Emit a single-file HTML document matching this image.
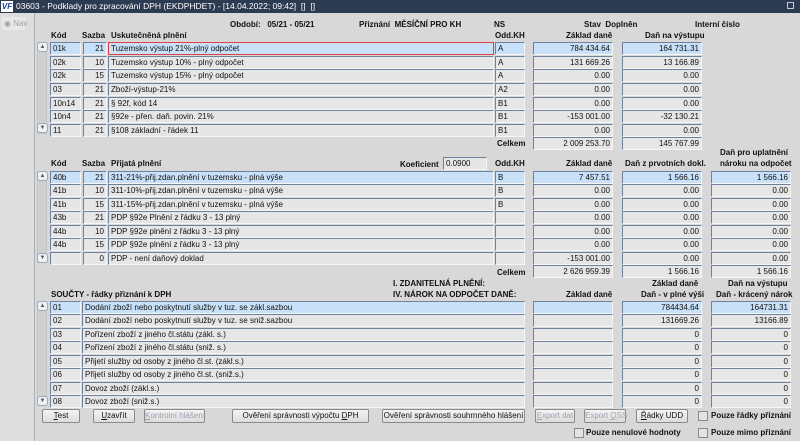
<!DOCTYPE html>
<html><head><meta charset="utf-8"><style>
*{margin:0;padding:0;box-sizing:border-box}
body{width:800px;height:441px;overflow:hidden;background:#d8d8d8;font-family:"Liberation Sans",Arial,sans-serif;font-size:8px;color:#111;position:relative}
div{position:absolute;white-space:nowrap}
#tb{left:0;top:0;width:800px;height:13px;background:#2c3a52;color:#fff;font-size:8.5px;line-height:13px;padding-left:16px}
#logo{left:1px;top:1px;width:12px;height:11px;background:#fff;color:#1a3ea0;font-weight:bold;font-size:8px;line-height:11px;text-align:center;font-style:italic}
#left{left:0;top:13px;width:35px;height:428px;background:#dedede;border-right:1px solid #a8b0bc}
.f{height:13px;background:#e6e6e6;border:1px solid;border-color:#6f819e #f6f6f6 #f6f6f6 #6f819e;line-height:11px;padding:0 2px;overflow:hidden}
.r{text-align:right}
.s{background:#c8e1f9}
.h{font-weight:bold}
.sb{left:37px;width:10px;background:#d0d0d0;border:1px solid #c4c4c4}
.ar{left:37px;width:11px;height:10px;border:1px solid #a0a8b8;border-radius:3px;background:#eef0f4;font-size:6px;line-height:8px;text-align:center;color:#556}
.b{height:14px;border:1px solid #8a8a8a;background:linear-gradient(#f4f4f4,#dcdcdc);text-align:center;line-height:12px;border-radius:2px}
.dis{color:#9aa0b0}
.cb{width:10px;height:10px;border:1px solid #8a8a8a;background:#e4e4e4}
</style></head><body>
<div id="tb">03603 - Podklady pro zpracování DPH (EKDPHDET) - [14.04.2022; 09:42] &nbsp;[] &nbsp;[]</div>
<div id="logo">VF</div>
<div style="right:6px;top:2px;width:7px;height:7px;border:1px solid #ccc"></div>
<div id="left"></div>
<div style="left:2px;top:17px;width:23px;height:13px;background:#e8e8e8;color:#a0a0a0;line-height:13px;padding-left:2px">◉ Nav</div>

<div class="h" style="left:230px;top:20px">Období: &nbsp;&nbsp;05/21 - 05/21</div>
<div class="h" style="left:359px;top:20px">Přiznání &nbsp;MĚSÍČNÍ PRO KH</div>
<div class="h" style="left:494px;top:20px">NS</div>
<div class="h" style="left:584px;top:20px">Stav &nbsp;Doplněn</div>
<div class="h" style="left:695px;top:20px">Interní číslo</div>
<div class="h" style="left:51px;top:31px">Kód</div>
<div class="h" style="left:82px;top:31px">Sazba</div>
<div class="h" style="left:111px;top:31px">Uskutečněná plnění</div>
<div class="h" style="left:495px;top:31px">Odd.KH</div>
<div class="h" style="left:566px;top:31px">Základ daně</div>
<div class="h" style="left:645px;top:31px">Daň na výstupu</div>

<div class="sb" style="top:42px;height:92px"></div>
<div class="ar" style="top:42px">▲</div><div class="ar" style="top:123px">▼</div>

<div class="f s" style="left:50px;top:42px;width:31px">01k</div><div class="f r s" style="left:83px;top:42px;width:24px">21</div><div class="f s" style="left:108px;top:42px;width:386px;border:1px solid #e04040">Tuzemsko výstup 21%-plný odpočet</div><div class="f s" style="left:495px;top:42px;width:30px">A</div><div class="f r s" style="left:533px;top:42px;width:80px">784 434.64</div><div class="f r s" style="left:622px;top:42px;width:80px">164 731.31</div>
<div class="f" style="left:50px;top:56px;width:31px">02k</div><div class="f r" style="left:83px;top:56px;width:24px">10</div><div class="f" style="left:108px;top:56px;width:386px">Tuzemsko výstup 10% - plný odpočet</div><div class="f" style="left:495px;top:56px;width:30px">A</div><div class="f r" style="left:533px;top:56px;width:80px">131 669.26</div><div class="f r" style="left:622px;top:56px;width:80px">13 166.89</div>
<div class="f" style="left:50px;top:69px;width:31px">02k</div><div class="f r" style="left:83px;top:69px;width:24px">15</div><div class="f" style="left:108px;top:69px;width:386px">Tuzemsko výstup 15% - plný odpočet</div><div class="f" style="left:495px;top:69px;width:30px">A</div><div class="f r" style="left:533px;top:69px;width:80px">0.00</div><div class="f r" style="left:622px;top:69px;width:80px">0.00</div>
<div class="f" style="left:50px;top:83px;width:31px">03</div><div class="f r" style="left:83px;top:83px;width:24px">21</div><div class="f" style="left:108px;top:83px;width:386px">Zboží-výstup-21%</div><div class="f" style="left:495px;top:83px;width:30px">A2</div><div class="f r" style="left:533px;top:83px;width:80px">0.00</div><div class="f r" style="left:622px;top:83px;width:80px">0.00</div>
<div class="f" style="left:50px;top:97px;width:31px">10n14</div><div class="f r" style="left:83px;top:97px;width:24px">21</div><div class="f" style="left:108px;top:97px;width:386px">§ 92f, kód 14</div><div class="f" style="left:495px;top:97px;width:30px">B1</div><div class="f r" style="left:533px;top:97px;width:80px">0.00</div><div class="f r" style="left:622px;top:97px;width:80px">0.00</div>
<div class="f" style="left:50px;top:110px;width:31px">10n4</div><div class="f r" style="left:83px;top:110px;width:24px">21</div><div class="f" style="left:108px;top:110px;width:386px">§92e - přen. daň. povin. 21%</div><div class="f" style="left:495px;top:110px;width:30px">B1</div><div class="f r" style="left:533px;top:110px;width:80px">-153 001.00</div><div class="f r" style="left:622px;top:110px;width:80px">-32 130.21</div>
<div class="f" style="left:50px;top:124px;width:31px">11</div><div class="f r" style="left:83px;top:124px;width:24px">21</div><div class="f" style="left:108px;top:124px;width:386px">§108 základní - řádek 11</div><div class="f" style="left:495px;top:124px;width:30px">B1</div><div class="f r" style="left:533px;top:124px;width:80px">0.00</div><div class="f r" style="left:622px;top:124px;width:80px">0.00</div>
<div class="h" style="left:497px;top:139px">Celkem</div>
<div class="f r" style="left:533px;top:137px;width:80px">2 009 253.70</div><div class="f r" style="left:622px;top:137px;width:80px">145 767.99</div>

<div class="h" style="left:720px;top:148px">Daň pro uplatnění</div>
<div class="h" style="left:720px;top:159px">nároku na odpočet</div>
<div class="h" style="left:51px;top:159px">Kód</div>
<div class="h" style="left:82px;top:159px">Sazba</div>
<div class="h" style="left:111px;top:159px">Přijatá plnění</div>
<div class="h" style="left:400px;top:160px">Koeficient</div>
<div class="f" style="left:443px;top:157px;width:44px">0.0900</div>
<div class="h" style="left:495px;top:159px">Odd.KH</div>
<div class="h" style="left:566px;top:159px">Základ daně</div>
<div class="h" style="left:625px;top:159px">Daň z prvotních dokl.</div>

<div class="sb" style="top:171px;height:92px"></div>
<div class="ar" style="top:171px">▲</div><div class="ar" style="top:253px">▼</div>

<div class="f s" style="left:50px;top:171px;width:31px">40b</div><div class="f r s" style="left:83px;top:171px;width:24px">21</div><div class="f s" style="left:108px;top:171px;width:386px">311-21%-přij.zdan.plnění v tuzemsku - plná výše</div><div class="f s" style="left:495px;top:171px;width:30px">B</div><div class="f r s" style="left:533px;top:171px;width:80px">7 457.51</div><div class="f r s" style="left:622px;top:171px;width:80px">1 566.16</div><div class="f r s" style="left:711px;top:171px;width:80px">1 566.16</div>
<div class="f" style="left:50px;top:184px;width:31px">41b</div><div class="f r" style="left:83px;top:184px;width:24px">10</div><div class="f" style="left:108px;top:184px;width:386px">311-10%-přij.zdan.plnění v tuzemsku - plná výše</div><div class="f" style="left:495px;top:184px;width:30px">B</div><div class="f r" style="left:533px;top:184px;width:80px">0.00</div><div class="f r" style="left:622px;top:184px;width:80px">0.00</div><div class="f r" style="left:711px;top:184px;width:80px">0.00</div>
<div class="f" style="left:50px;top:198px;width:31px">41b</div><div class="f r" style="left:83px;top:198px;width:24px">15</div><div class="f" style="left:108px;top:198px;width:386px">311-15%-přij.zdan.plnění v tuzemsku - plná výše</div><div class="f" style="left:495px;top:198px;width:30px">B</div><div class="f r" style="left:533px;top:198px;width:80px">0.00</div><div class="f r" style="left:622px;top:198px;width:80px">0.00</div><div class="f r" style="left:711px;top:198px;width:80px">0.00</div>
<div class="f" style="left:50px;top:211px;width:31px">43b</div><div class="f r" style="left:83px;top:211px;width:24px">21</div><div class="f" style="left:108px;top:211px;width:386px">PDP §92e Plnění z řádku 3 - 13 plný</div><div class="f" style="left:495px;top:211px;width:30px"></div><div class="f r" style="left:533px;top:211px;width:80px">0.00</div><div class="f r" style="left:622px;top:211px;width:80px">0.00</div><div class="f r" style="left:711px;top:211px;width:80px">0.00</div>
<div class="f" style="left:50px;top:225px;width:31px">44b</div><div class="f r" style="left:83px;top:225px;width:24px">10</div><div class="f" style="left:108px;top:225px;width:386px">PDP §92e plnění z řádku 3 - 13 plný</div><div class="f" style="left:495px;top:225px;width:30px"></div><div class="f r" style="left:533px;top:225px;width:80px">0.00</div><div class="f r" style="left:622px;top:225px;width:80px">0.00</div><div class="f r" style="left:711px;top:225px;width:80px">0.00</div>
<div class="f" style="left:50px;top:238px;width:31px">44b</div><div class="f r" style="left:83px;top:238px;width:24px">15</div><div class="f" style="left:108px;top:238px;width:386px">PDP §92e plnění z řádku 3 - 13 plný</div><div class="f" style="left:495px;top:238px;width:30px"></div><div class="f r" style="left:533px;top:238px;width:80px">0.00</div><div class="f r" style="left:622px;top:238px;width:80px">0.00</div><div class="f r" style="left:711px;top:238px;width:80px">0.00</div>
<div class="f" style="left:50px;top:252px;width:31px"></div><div class="f r" style="left:83px;top:252px;width:24px">0</div><div class="f" style="left:108px;top:252px;width:386px">PDP - není daňový doklad</div><div class="f" style="left:495px;top:252px;width:30px"></div><div class="f r" style="left:533px;top:252px;width:80px">-153 001.00</div><div class="f r" style="left:622px;top:252px;width:80px">0.00</div><div class="f r" style="left:711px;top:252px;width:80px">0.00</div>
<div class="h" style="left:497px;top:268px">Celkem</div>
<div class="f r" style="left:533px;top:265px;width:80px">2 626 959.39</div><div class="f r" style="left:622px;top:265px;width:80px">1 566.16</div><div class="f r" style="left:711px;top:265px;width:80px">1 566.16</div>

<div class="h" style="left:393px;top:279px">I. ZDANITELNÁ PLNĚNÍ:</div>
<div class="h" style="left:393px;top:290px">IV. NÁROK NA ODPOČET DANĚ:</div>
<div class="h" style="left:51px;top:290px">SOUČTY - řádky přiznání k DPH</div>
<div class="h" style="left:652px;top:279px">Základ daně</div>
<div class="h" style="left:728px;top:279px">Daň na výstupu</div>
<div class="h" style="left:566px;top:290px">Základ daně</div>
<div class="h" style="left:641px;top:290px">Daň - v plné výši</div>
<div class="h" style="left:716px;top:290px">Daň - krácený nárok</div>

<div class="sb" style="top:301px;height:105px"></div>
<div class="ar" style="top:301px">▲</div><div class="ar" style="top:396px">▼</div>

<div class="f s" style="left:50px;top:301px;width:31px">01</div><div class="f s" style="left:82px;top:301px;width:443px">Dodání zboží nebo poskytnutí služby v tuz. se zákl.sazbou</div><div class="f s" style="left:533px;top:301px;width:80px"></div><div class="f r s" style="left:622px;top:301px;width:80px">784434.64</div><div class="f r s" style="left:711px;top:301px;width:80px">164731.31</div>
<div class="f" style="left:50px;top:314px;width:31px">02</div><div class="f" style="left:82px;top:314px;width:443px">Dodání zboží nebo poskytnutí služby v tuz. se sniž.sazbou</div><div class="f" style="left:533px;top:314px;width:80px"></div><div class="f r" style="left:622px;top:314px;width:80px">131669.26</div><div class="f r" style="left:711px;top:314px;width:80px">13166.89</div>
<div class="f" style="left:50px;top:328px;width:31px">03</div><div class="f" style="left:82px;top:328px;width:443px">Pořízení zboží z jiného čl.státu (zákl. s.)</div><div class="f" style="left:533px;top:328px;width:80px"></div><div class="f r" style="left:622px;top:328px;width:80px">0</div><div class="f r" style="left:711px;top:328px;width:80px">0</div>
<div class="f" style="left:50px;top:341px;width:31px">04</div><div class="f" style="left:82px;top:341px;width:443px">Pořízení zboží z jiného čl.státu (sniž. s.)</div><div class="f" style="left:533px;top:341px;width:80px"></div><div class="f r" style="left:622px;top:341px;width:80px">0</div><div class="f r" style="left:711px;top:341px;width:80px">0</div>
<div class="f" style="left:50px;top:355px;width:31px">05</div><div class="f" style="left:82px;top:355px;width:443px">Přijetí služby od osoby z jiného čl.st. (zákl.s.)</div><div class="f" style="left:533px;top:355px;width:80px"></div><div class="f r" style="left:622px;top:355px;width:80px">0</div><div class="f r" style="left:711px;top:355px;width:80px">0</div>
<div class="f" style="left:50px;top:368px;width:31px">06</div><div class="f" style="left:82px;top:368px;width:443px">Přijetí služby od osoby z jiného čl.st. (sniž.s.)</div><div class="f" style="left:533px;top:368px;width:80px"></div><div class="f r" style="left:622px;top:368px;width:80px">0</div><div class="f r" style="left:711px;top:368px;width:80px">0</div>
<div class="f" style="left:50px;top:382px;width:31px">07</div><div class="f" style="left:82px;top:382px;width:443px">Dovoz zboží (zákl.s.)</div><div class="f" style="left:533px;top:382px;width:80px"></div><div class="f r" style="left:622px;top:382px;width:80px">0</div><div class="f r" style="left:711px;top:382px;width:80px">0</div>
<div class="f" style="left:50px;top:395px;width:31px">08</div><div class="f" style="left:82px;top:395px;width:443px">Dovoz zboží (sniž.s.)</div><div class="f" style="left:533px;top:395px;width:80px"></div><div class="f r" style="left:622px;top:395px;width:80px">0</div><div class="f r" style="left:711px;top:395px;width:80px">0</div>

<div class="b" style="left:42px;top:409px;width:38px"><u>T</u>est</div>
<div class="b" style="left:93px;top:409px;width:42px"><u>U</u>zavřít</div>
<div class="b dis" style="left:144px;top:409px;width:61px"><u>K</u>ontrolní hlášení</div>
<div class="b" style="left:232px;top:409px;width:137px">Ověření správnosti výpočtu <u>D</u>PH</div>
<div class="b" style="left:382px;top:409px;width:143px">Ověření správnosti souhrnného hlášení</div>
<div class="b dis" style="left:535px;top:409px;width:40px"><u>E</u>xport dat</div>
<div class="b dis" style="left:584px;top:409px;width:42px">Export <u>Q</u>SS</div>
<div class="b" style="left:636px;top:409px;width:52px"><u>Ř</u>ádky UDD</div>
<div class="cb" style="left:698px;top:411px"></div><div class="h" style="left:711px;top:411px">Pouze řádky přiznání</div>
<div class="cb" style="left:574px;top:428px"></div><div class="h" style="left:586px;top:428px">Pouze nenulové hodnoty</div>
<div class="cb" style="left:698px;top:428px"></div><div class="h" style="left:711px;top:428px">Pouze mimo přiznání</div>
</body></html>
